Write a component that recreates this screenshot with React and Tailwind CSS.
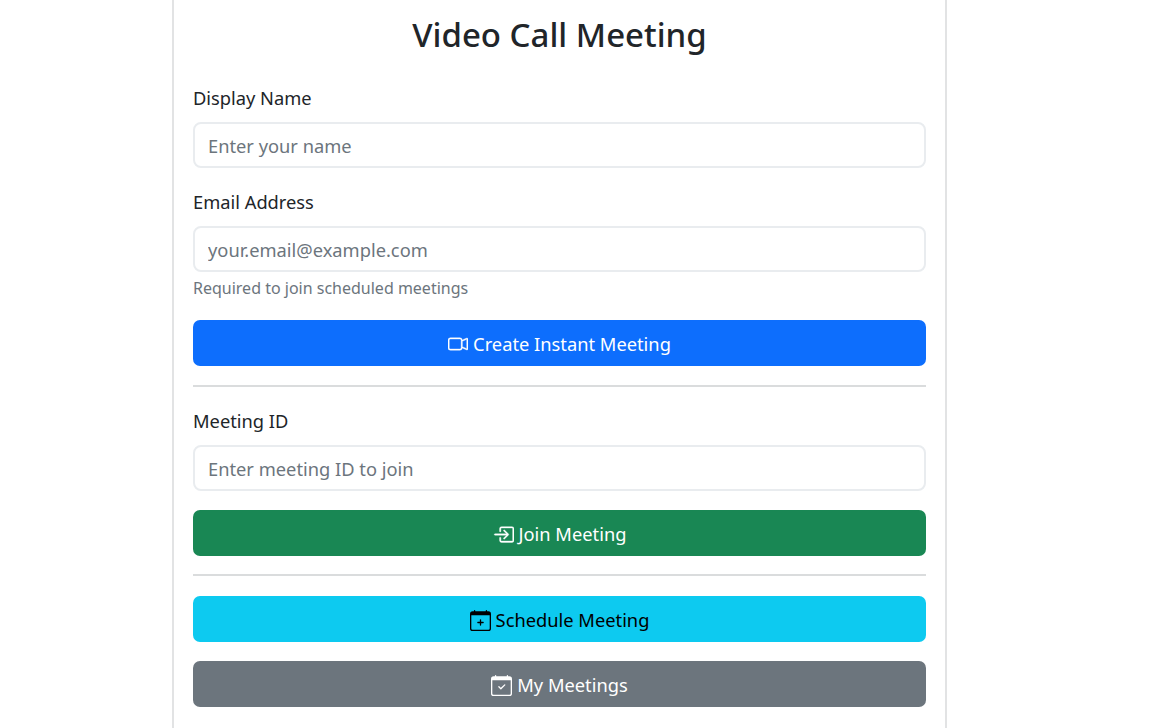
import { BsCameraVideo, BsBoxArrowInRight, BsCalendarPlus, BsCalendarCheck } from "react-icons/bs";

const Field = ({ label, placeholder, type = "text" }) => (
    <div>
        <label className="block text-[18.3px] leading-[29px] text-[#212529] mb-[10px]">{label}</label>
        <input
            type={type}
            placeholder={placeholder}
            className="block w-full h-[46px] px-[13px] text-[18.3px] rounded-[8px] border-2 border-[#e9ecef] bg-white text-[#212529] placeholder:text-[#6c757d] outline-none"
        />
    </div>
);

const ActionButton = ({ icon, children, className }) => (
    <button className={`flex items-center justify-center gap-[5px] w-full h-[46px] pt-[2px] rounded-[7px] text-[18.3px] ${className}`}>
        {icon}
        {children}
    </button>
);

export default function App() {
    return (
        <div className="h-[728px] overflow-hidden bg-white font-['Noto_Sans',sans-serif]">
            <div className="ml-[172px] w-[775px] h-[760px] -mt-[10px] px-[19px] pt-[22px] bg-white border-x-2 border-[#e2e3e4] rounded-[7px]">
                <h2 className="text-center text-[33px] leading-[46px] font-medium text-[#212529] mb-[25px]">Video Call Meeting</h2>
                <Field label="Display Name" placeholder="Enter your name" />
                <div className="mt-[19px]">
                    <Field label="Email Address" placeholder="your.email@example.com" type="email" />
                </div>
                <p className="mt-[4px] text-[16px] leading-[24px] text-[#6c757d]">Required to join scheduled meetings</p>
                <ActionButton className="mt-[20px] bg-[#0d6efd] text-white" icon={<BsCameraVideo className="w-[20px] h-[20px]" stroke="currentColor" strokeWidth={0.3} />}>
                    Create Instant Meeting
                </ActionButton>
                <hr className="mt-[19px] mb-[19px] border-t-2 border-[#dadcdd]" />
                <Field label="Meeting ID" placeholder="Enter meeting ID to join" />
                <ActionButton className="mt-[19px] bg-[#198754] text-white" icon={<BsBoxArrowInRight className="w-[21px] h-[21px]" stroke="currentColor" strokeWidth={0.3} />}>
                    Join Meeting
                </ActionButton>
                <hr className="mt-[18px] mb-[20px] border-t-2 border-[#dadcdd]" />
                <ActionButton className="bg-[#0dcaf0] text-black" icon={<BsCalendarPlus className="w-[21px] h-[21px]" />}>
                    Schedule Meeting
                </ActionButton>
                <ActionButton className="mt-[19px] bg-[#6c757d] text-white" icon={<BsCalendarCheck className="w-[21px] h-[21px]" />}>
                    My Meetings
                </ActionButton>
            </div>
        </div>
    );
}
